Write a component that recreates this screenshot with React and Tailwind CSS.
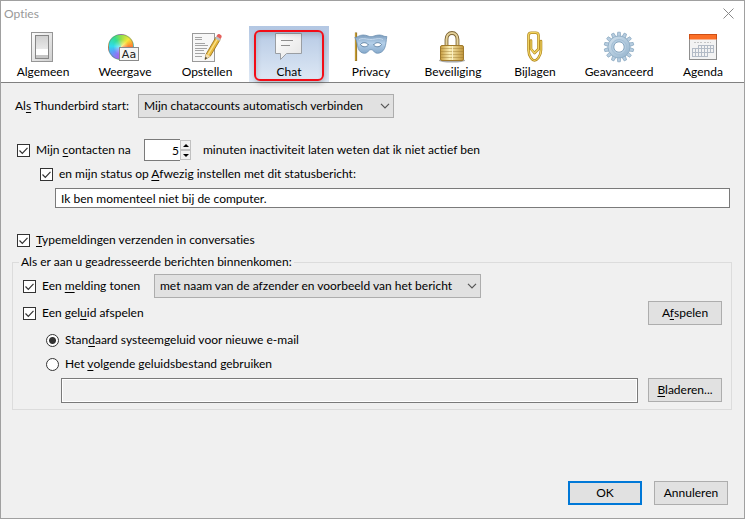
import React from "react";

const iconBox = "h-8 w-[34px] shrink-0";

function SwitchIcon() {
  return (
    <svg viewBox="0 0 34 32" className={iconBox} aria-hidden="true">
      <defs>
        <linearGradient id="plate" x1="0" y1="0" x2="1" y2="1">
          <stop offset="0" stopColor="#fcfcfc" />
          <stop offset="1" stopColor="#cfcfcf" />
        </linearGradient>
        <linearGradient id="rocker" x1="0" y1="0" x2="0" y2="1">
          <stop offset="0" stopColor="#d0d0d0" />
          <stop offset="1" stopColor="#e8e8e8" />
        </linearGradient>
      </defs>
      <rect x="5.5" y="1.5" width="21" height="29" fill="url(#plate)" stroke="#969696" />
      <rect x="9.5" y="4.5" width="13" height="23" fill="#f4f4f4" stroke="#868686" />
      <rect x="10" y="5" width="12" height="13" fill="url(#rocker)" />
      <rect x="10" y="18" width="12" height="6" fill="#ffffff" />
      <rect x="10" y="24" width="12" height="3" fill="#c4c4c4" />
    </svg>
  );
}

function ColorsIcon() {
  return (
    <svg viewBox="0 0 34 32" className={iconBox} aria-hidden="true">
      <foreignObject x="0" y="3" width="26" height="26">
        <div className="size-[26px] rounded-full border border-[#5a8a6a]/50 bg-[radial-gradient(circle,rgba(255,255,255,0.55)_0%,transparent_45%),conic-gradient(#8fe04a_0deg,#f5e63c_45deg,#ff9a2e_75deg,#f2404c_110deg,#e052c0_160deg,#9a6cf0_200deg,#5aa0f8_240deg,#2fdcec_275deg,#36dc90_325deg,#8fe04a_360deg)]" />
      </foreignObject>
      <rect x="11.5" y="16.5" width="19" height="13" fill="#f6f6f6" stroke="#8a8a8a" />
      <text x="21" y="27" textAnchor="middle" fontSize="11" fill="#222" fontFamily="DejaVu Sans, sans-serif">Aa</text>
    </svg>
  );
}

function ComposeIcon() {
  return (
    <svg viewBox="0 0 34 32" className={iconBox} aria-hidden="true">
      <rect x="2.5" y="2.5" width="22" height="28" fill="#f7f7f7" stroke="#9a9a9a" />
      <path d="M5 6.500h7M5 8.500h7M5 12.500h10M5 14.500h13M5 17.500h12M5 19.500h9M5 22.500h10M5 25.500h7" stroke="#a4a4a4" fill="none" />
      <path d="M15 28.500l1.200-5.500L26 6l4.200 2.600L20.300 25.200z" fill="#e8b93a" stroke="#8f6a1c" strokeWidth=".8" />
      <path d="M18 23.500L28 7" stroke="#fbe38c" strokeWidth="1.400" />
      <path d="M15 28.500l1.200-5.500 4.100 2.200z" fill="#f3deb0" />
      <path d="M15 28.500l.5-2.500 1.700 1z" fill="#222" />
      <path d="M25.200 7.300l1.200-2 4.200 2.600-1.200 2z" fill="#b9c2c8" />
      <path d="M26.400 5.300l.8-1.300c.6-1 1.600-1.200 2.500-.7l1.200.8c.9.600 1 1.600.5 2.500l-.8 1.300z" fill="#e5605c" />
    </svg>
  );
}

function ChatIcon() {
  return (
    <svg viewBox="0 0 34 32" className={iconBox} aria-hidden="true">
      <defs>
        <linearGradient id="bubble" x1="0" y1="0" x2="1" y2="1">
          <stop offset="0" stopColor="#ffffff" />
          <stop offset="1" stopColor="#e4e4e4" />
        </linearGradient>
      </defs>
      <path d="M3.500 2.500h26v20H14.500l-6 6v-6h-5z" fill="url(#bubble)" stroke="#9a9ea3" />
      <path d="M9 9.500h12M9 14.500h9" stroke="#8f8f8f" fill="none" />
    </svg>
  );
}

function MaskIcon() {
  return (
    <svg viewBox="0 0 34 32" className={iconBox} aria-hidden="true">
      <defs>
        <linearGradient id="mask" x1="0" y1="0" x2="0" y2="1">
          <stop offset="0" stopColor="#7d9dbd" />
          <stop offset=".45" stopColor="#b4d0ea" />
          <stop offset="1" stopColor="#86a9cb" />
        </linearGradient>
      </defs>
      <path d="M2 1.500v28.500" stroke="#8c6a1e" strokeWidth="2.200" />
      <path d="M1.800 2v27.500" stroke="#dcb23c" strokeWidth="1" />
      <path d="M.8 6.500C3 6.800 5 4 9 4c4 0 5.500 1.700 8 1.700S21.500 4 25.500 4c3 0 4.500 2 7.300 1.500-.6 4-.8 8.500-2.300 12-1.300 2.800-4 4.800-7 4.800-3.300 0-4.300-3.800-6.500-3.800s-3.200 3.800-6.500 3.800c-3 0-5.300-2-6.300-4.800C3 14 3.200 9.500.8 6.500z" fill="url(#mask)" stroke="#6d90b2" strokeWidth=".8" />
      <path d="M5 8.500c4-2 8 0 12 0s8-2 12 0" stroke="#cfe1f2" strokeWidth=".8" fill="none" />
      <path d="M6.500 13.500c1.800-2.400 5.800-2.600 8 .5-2.200 2.400-6.400 2.400-8-.5zM27.500 13.500c-1.800-2.400-5.800-2.600-8 .5 2.200 2.400 6.400 2.400 8-.5z" fill="#ffffff" stroke="#54789c" strokeWidth=".9" />
    </svg>
  );
}

function LockIcon() {
  return (
    <svg viewBox="0 0 34 32" className={iconBox} aria-hidden="true">
      <defs>
        <linearGradient id="brass" x1="0" y1="0" x2="1" y2="0">
          <stop offset="0" stopColor="#c79d40" />
          <stop offset=".4" stopColor="#fbeeb4" />
          <stop offset="1" stopColor="#c0953a" />
        </linearGradient>
      </defs>
      <ellipse cx="16" cy="29.500" rx="13" ry="2" fill="#555" opacity=".5" />
      <path d="M10.500 16V8.500C10.500 4.500 13 2 16 2s5.500 2.500 5.500 6.500V16" stroke="#7d6535" strokeWidth="3.800" fill="none" />
      <path d="M10.500 16V8.500C10.500 4.500 13 2 16 2s5.500 2.500 5.500 6.500V16" stroke="#e4d19a" strokeWidth="2" fill="none" />
      <rect x="4.500" y="14.500" width="23" height="15" rx="1.500" fill="url(#brass)" stroke="#a07a2c" />
      <path d="M5 17.500h22M5 20.500h22M5 23.500h22M5 26.500h22" stroke="#97742c" opacity=".4" />
      <path d="M16.500 15v14" stroke="#fff6d0" opacity=".8" />
    </svg>
  );
}

function ClipIcon() {
  const d = "M10.500 19V4.500c0-1.800 1-2.800 2.800-2.800h4.400c1.800 0 2.800 1 2.800 2.800V18l-4 4-3.500-4V9.500M10.500 19c0 3 .8 5.500 2.500 8 1.200 1.800 2 2.500 3.500 2.500s2.500-.8 3.800-2.500c1.700-2.400 2.700-5 2.700-8V10";
  return (
    <svg viewBox="0 0 34 32" className={iconBox} aria-hidden="true">
      <path d={d} stroke="#b0861f" strokeWidth="2.600" fill="none" strokeLinejoin="round" strokeLinecap="round" />
      <path d={d} stroke="#f2d561" strokeWidth="1.200" fill="none" strokeLinejoin="round" strokeLinecap="round" />
    </svg>
  );
}

function GearIcon() {
  const teeth = Array.from({ length: 14 }, (_, i) => (i * 360) / 14);
  return (
    <svg viewBox="0 0 34 32" className={iconBox} aria-hidden="true">
      <defs>
        <linearGradient id="steel" x1="0" y1="0" x2="1" y2="1">
          <stop offset="0" stopColor="#d3e2ee" />
          <stop offset="1" stopColor="#93b3cd" />
        </linearGradient>
      </defs>
      {teeth.map((a) => (
        <path key={a} d="M15.200 5.500l.5-4.300h2.600l.5 4.300z" fill="#b7cde0" stroke="#86a5be" strokeWidth=".7" transform={`rotate(${a} 17 16)`} />
      ))}
      <circle cx="17" cy="16" r="11" fill="url(#steel)" stroke="#8dabc3" strokeWidth=".8" />
      <circle cx="17" cy="16" r="7.500" fill="#b4cce0" stroke="#a4bfd5" />
      <circle cx="17" cy="16" r="5.200" fill="#ffffff" stroke="#86a5be" />
    </svg>
  );
}

function CalendarIcon() {
  return (
    <svg viewBox="0 0 34 32" className={iconBox} aria-hidden="true">
      <rect x="3.500" y="3.500" width="27" height="25" fill="#f3f3f3" stroke="#8f8f8f" />
      <rect x="3" y="3" width="28" height="5.500" fill="#fb7028" />
      <path d="M3 3.500h28M3.500 3v5M30.500 3v5" stroke="#cf4f14" />
      <path d="M8 11.500h8M18 11.500h7" stroke="#c6c6c6" strokeDasharray="2 1" />
      <path d="M12 14.500h16M6 17.500h22M6 21.500h22M6 25.500h16M6.500 18v8M9.500 18v8M12.500 14v12M15.500 14v12M18.500 14v12M21.500 14v12M24.500 14v8M27.500 14v8" stroke="#b3bbc6" fill="none" />
    </svg>
  );
}

const tabs = [
  { name: "Algemeen", Icon: SwitchIcon },
  { name: "Weergave", Icon: ColorsIcon },
  { name: "Opstellen", Icon: ComposeIcon },
  { name: "Chat", Icon: ChatIcon, active: true },
  { name: "Privacy", Icon: MaskIcon },
  { name: "Beveiliging", Icon: LockIcon },
  { name: "Bijlagen", Icon: ClipIcon },
  { name: "Geavanceerd", Icon: GearIcon, wide: true },
  { name: "Agenda", Icon: CalendarIcon },
];

function Tab({ name, Icon, active, wide }) {
  return (
    <button
      type="button"
      role="tab"
      aria-selected={!!active}
      className={`relative flex h-14 shrink-0 flex-col items-center pt-[5px] ${wide ? "w-[84px]" : "w-20"} ${
        active ? "bg-linear-to-b from-[#b3c7e3] to-[#dfe9f5]" : ""
      }`}
    >
      <Icon />
      <span className="leading-[18px]">{name}</span>
      {active && (
        <span className="pointer-events-none absolute inset-x-[5px] top-1 bottom-px rounded-md border-2 border-[#f20d17] shadow-[1px_3px_5px_rgba(0,0,0,0.2),inset_1px_3px_5px_rgba(0,0,0,0.15)]" />
      )}
    </button>
  );
}

function Key({ children }) {
  return <span className="underline underline-offset-2">{children}</span>;
}

function Check({ children }) {
  return (
    <label className="flex items-center gap-1.5">
      <span className="grid size-[13px] shrink-0">
        <input type="checkbox" defaultChecked className="peer size-[13px] appearance-none border border-[#333] bg-white [grid-area:1/1]" />
        <svg viewBox="0 0 13 13" className="pointer-events-none invisible size-[13px] peer-checked:visible [grid-area:1/1]" aria-hidden="true">
          <path d="M2.500 6.500l2.800 2.800 5.200-5.500" fill="none" stroke="#333" strokeWidth="1.200" />
        </svg>
      </span>
      <span>{children}</span>
    </label>
  );
}

function Radio({ checked, children }) {
  return (
    <label className="flex h-6 items-center gap-1.5">
      <input
        type="radio"
        name="sound"
        defaultChecked={checked}
        className="size-[13px] shrink-0 appearance-none rounded-full border border-[#333] bg-white checked:bg-[radial-gradient(circle,#333_0_3px,#fff_4px)]"
      />
      <span>{children}</span>
    </label>
  );
}

function Select({ id, label, value, className }) {
  return (
    <span className={`relative flex ${className}`}>
      <select id={id} aria-label={label} className="h-6 w-full appearance-none border border-[#adadad] bg-[#e1e1e1] pr-5 pl-[5px]">
        <option>{value}</option>
      </select>
      <svg viewBox="0 0 10 6" className="pointer-events-none absolute top-[9px] right-1 h-1.5 w-2.5" aria-hidden="true">
        <path d="M1 .8l4 4 4-4" fill="none" stroke="#555" strokeWidth="1.200" />
      </svg>
    </span>
  );
}

function Button({ primary, children }) {
  return (
    <button
      type="button"
      className={`h-6 w-[74px] shrink-0 bg-[#e1e1e1] ${primary ? "border-2 border-[#0078d7]" : "border border-[#adadad]"}`}
    >
      {children}
    </button>
  );
}

export default function App() {
  return (
    <main className="flex min-h-screen flex-col border border-[#a0a0a0] bg-[#f0f0f0] font-['Lato','Open_Sans',sans-serif] text-[12px] leading-4 whitespace-nowrap text-black [font-variant-ligatures:none]">
      <header className="bg-white">
        <div className="flex h-[25px] items-center justify-between pr-2.5 pl-[3px]">
          <h1 className="text-[#999]">Opties</h1>
          <button type="button" aria-label="Sluiten">
            <svg viewBox="0 0 11 11" className="size-[11px]" aria-hidden="true">
              <path d="M.5.5l10 10M10.500.5l-10 10" stroke="#888" />
            </svg>
          </button>
        </div>
        <nav role="tablist" className="flex gap-0.5 border-b border-[#808080] pl-0.5">
          {tabs.map((t) => (
            <Tab key={t.name} {...t} />
          ))}
        </nav>
      </header>

      <section className="flex flex-col pt-[11px]">
        <div className="flex items-center gap-2 pl-3.5">
          <label htmlFor="start" className="w-[115px]">
            Al<Key>s</Key> Thunderbird start:
          </label>
          <Select id="start" value="Mijn chataccounts automatisch verbinden" className="w-64" />
        </div>

        <div className="mt-5 flex h-6 items-center pl-4">
          <div className="w-[127px]">
            <Check>
              Mijn <Key>c</Key>ontacten na
            </Check>
          </div>
          <input
            type="text"
            aria-label="Minuten"
            defaultValue="5"
            className="h-[22px] w-9 border border-r-0 border-[#7a7a7a] bg-white pr-px text-right"
          />
          <span className="flex h-5 w-[11px] flex-col">
            <button type="button" aria-label="Meer" className="flex h-2.5 items-center justify-center border border-[#c0c0c0] bg-[#f0f0f0]">
              <svg viewBox="0 0 6 3" className="h-[3px] w-1.5"><path d="M0 3l3-3 3 3z" /></svg>
            </button>
            <button type="button" aria-label="Minder" className="flex h-2.5 items-center justify-center border border-[#c0c0c0] bg-[#f0f0f0]">
              <svg viewBox="0 0 6 3" className="h-[3px] w-1.5"><path d="M0 0l3 3 3-3z" /></svg>
            </button>
          </span>
          <span className="pl-3">minuten inactiviteit laten weten dat ik niet actief ben</span>
        </div>

        <div className="flex h-6 items-center pl-[39px]">
          <Check>
            en mijn status op <Key>A</Key>fwezig instellen met dit statusbericht:
          </Check>
        </div>
        <div className="flex pr-3.5 pl-[54px]">
          <input
            type="text"
            aria-label="Statusbericht"
            defaultValue="Ik ben momenteel niet bij de computer."
            className="mt-0.5 h-5 w-full border border-[#7a7a7a] bg-white px-[5px]"
          />
        </div>

        <div className="mt-5 flex h-6 items-center pl-4">
          <Check>
            <Key>T</Key>ypemeldingen verzenden in conversaties
          </Check>
        </div>

        <fieldset className="mr-3 ml-[11px] mt-0.5 border border-[#dcdcdc] pr-[9px] pb-1.5 pl-2.5">
          <legend className="-ml-1 px-0.5">Als er aan u geadresseerde berichten binnenkomen:</legend>
          <div className="mt-1 flex items-center">
            <div className="w-[131px]">
              <Check>
                Een <Key>m</Key>elding tonen
              </Check>
            </div>
            <Select id="notice" label="Inhoud van melding" value="met naam van de afzender en voorbeeld van het bericht" className="w-[327px]" />
          </div>
          <div className="mt-[3px] flex items-center justify-between">
            <Check>
              Een gel<Key>u</Key>id afspelen
            </Check>
            <Button>
              A<Key>f</Key>spelen
            </Button>
          </div>
          <div className="mt-[3px] pl-[23px]">
            <Radio checked>
              Stan<Key>d</Key>aard systeemgeluid voor nieuwe e-mail
            </Radio>
            <Radio>
              Het <Key>v</Key>olgende geluidsbestand gebruiken
            </Radio>
          </div>
          <div className="mt-0.5 flex gap-2.5 pl-[38px]">
            <input
              type="text"
              aria-label="Geluidsbestand"
              readOnly
              className="h-[25px] min-w-0 flex-1 border border-[#7a7a7a] bg-[#f0f0f0] px-[5px] shadow-[inset_0_0_0_1px_#fff]"
            />
            <Button>
              <Key>B</Key>laderen...
            </Button>
          </div>
        </fieldset>
      </section>

      <footer className="mt-auto flex justify-end gap-3 pr-4 pb-[13px]">
        <Button primary>OK</Button>
        <Button>Annuleren</Button>
      </footer>
    </main>
  );
}
